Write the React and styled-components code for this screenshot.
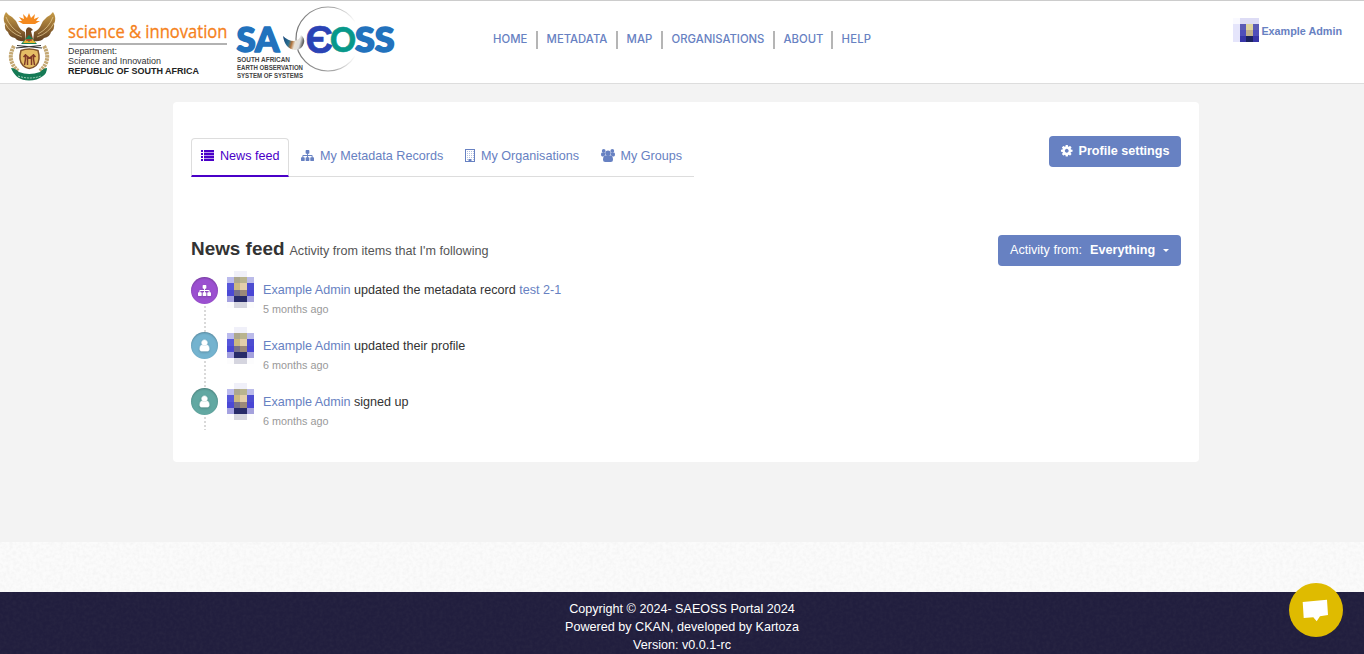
import React from "react";
import styled, { createGlobalStyle } from "styled-components";

const Global = createGlobalStyle`
  * { box-sizing: border-box; }
  body {
    margin: 0;
    background: #f3f3f3;
    color: #333;
    font: 12.6px/18px "Liberation Sans", Arial, sans-serif;
    overflow: hidden;
  }
`;

const Page = styled.div`
  height: 654px;
  display: flex;
  flex-direction: column;
`;

const Header = styled.header`
  height: 84px;
  flex: none;
  display: flex;
  align-items: flex-start;
  background: #fff;
  border-top: 1px solid #ccc;
  border-bottom: 1px solid #ddd;
`;

const LogoArt = styled.svg`
  display: block;
  flex: none;
`;

const Nav = styled.nav`
  display: flex;
  margin: 30px 0 0 84px;
  height: 18px;
  width: 400px;
  flex: none;
`;

const NavLink = styled.a`
  width: ${(p) => p.$w}px;
  flex: none;
  padding-left: ${(p) => (p.$first ? 0 : 8.6)}px;
  border-right: ${(p) => (p.$last ? "0" : "2px solid #b5b5b5")};
  color: #6781c2;
  font: 500 11.3px/16px Inter, "Open Sans", sans-serif;
  letter-spacing: ${(p) => p.$ls}px;
  white-space: nowrap;
`;

const Account = styled.div`
  margin: 17px 22px 0 auto;
  display: flex;
  color: #6781c2;
  font-weight: bold;
  font-size: 10.8px;
  line-height: 26px;
  gap: 3px;
  span { margin-left: -0.4px; }
`;

const Main = styled.main`
  height: 458px;
  flex: none;
  padding: 18px 165px 0 173px;
`;

const Card = styled.section`
  height: 360px;
  background: #fff;
  border-radius: 4px;
  padding: 34px 18px 0;
`;

const Row = styled.div`
  display: flex;
  justify-content: space-between;
  align-items: flex-start;
`;

const Tabs = styled.div`
  display: flex;
  width: 503px;
  height: 39px;
  margin-top: 2px;
  border-bottom: 1px solid #ddd;
`;

const Tab = styled.a`
  display: flex;
  align-items: center;
  height: 39px;
  width: ${(p) => p.$w}px;
  flex: none;
  padding-left: ${(p) => p.$pad || 9}px;
  padding-bottom: ${(p) => (p.$active ? 3 : 5)}px;
  white-space: nowrap;
  color: ${(p) => (p.$active ? "#4a00c8" : "#6781c2")};
  border: 1px solid ${(p) => (p.$active ? "#ddd" : "transparent")};
  border-bottom: ${(p) => (p.$active ? "2px solid #4a00c8" : "0")};
  border-radius: 4px 4px 0 0;
  svg { margin-right: 6px; }
`;

const Button = styled.button`
  display: flex;
  align-items: center;
  width: ${(p) => p.$w}px;
  height: 31px;
  padding: 0 0 1px ${(p) => p.$pad || 12}px;
  border: 0;
  border-radius: 4px;
  background: #6781c2;
  color: #fff;
  font: ${(p) => (p.$bold ? "bold" : "normal")} 12.6px/18px "Liberation Sans", Arial, sans-serif;
  white-space: nowrap;
  svg { margin-right: 5px; }
  strong { margin-left: 8px; }
`;

const Caret = styled.i`
  margin: 1px 0 0 8px;
  border: 3px solid transparent;
  border-top-color: #fff;
  border-bottom: 0;
`;

const FeedHead = styled(Row)`
  margin-top: 58px;
  height: 36px;
`;

const Heading = styled.h2`
  margin: 3px 0 0;
  font-size: 18.9px;
  line-height: 22px;
  small {
    margin-left: 5px;
    font-size: 12.6px;
    font-weight: normal;
    color: #555;
  }
`;

const Feed = styled.ul`
  list-style: none;
  margin: 0;
  padding: 0;
`;

const Item = styled.li`
  display: grid;
  grid-template-columns: 27px 27px 1fr;
  column-gap: 9px;
  height: 56px;
`;

const Rail = styled.div`
  display: flex;
  flex-direction: column;
  align-items: center;
  height: ${(p) => (p.$last ? 47 : 56)}px;
  padding-top: ${(p) => p.$top}px;
  margin-bottom: -6px;
  &::after {
    content: "";
    flex: 1;
    width: 2px;
    margin: 2px 0 ${(p) => (p.$last ? 0 : -5)}px 1px;
    background: repeating-linear-gradient(#d9d9d9 0 2px, transparent 2px 4px);
  }
`;

const Dot = styled.div`
  width: 27px;
  height: 27px;
  flex: none;
  position: relative;
  z-index: 1;
  border-radius: 50%;
  background: ${(p) => p.$c};
  box-shadow: inset 0 1px 2px rgba(0, 0, 0, 0.25);
  display: flex;
  align-items: center;
  justify-content: center;
  color: #fff;
  svg { filter: drop-shadow(0 1px 1px rgba(0, 0, 0, 0.2)); }
`;

const Entry = styled.div`
  padding-top: 10px;
  a { color: #6781c2; }
  time {
    display: block;
    margin-top: 1px;
    color: #999;
    font-size: 10.8px;
  }
`;

const Strip = styled.div`
  height: 50px;
  flex: none;
  background: #fbfbfb;
`;

const Footer = styled.footer`
  height: 62px;
  flex: none;
  padding-top: 8px;
  text-align: center;
  color: #fff;
  background: #211e3e;
  position: relative;
  p { margin: 0; position: relative; }
`;

const Grain = styled.svg`
  display: block;
  width: 100%;
  height: ${(p) => p.$h}px;
  position: ${(p) => (p.$over ? "absolute" : "static")};
  top: 0;
  left: 0;
`;

const Chat = styled.button`
  position: fixed;
  right: 21px;
  bottom: 17px;
  width: 54px;
  height: 54px;
  padding: 0;
  border: 0;
  border-radius: 50%;
  background: #dfbb00;
  svg { display: block; }
`;

const PATHS = {
  sitemap:
    "M1792 1248v320q0 40-28 68t-68 28h-320q-40 0-68-28t-28-68v-320q0-40 28-68t68-28h96v-192h-512v192h96q40 0 68 28t28 68v320q0 40-28 68t-68 28h-320q-40 0-68-28t-28-68v-320q0-40 28-68t68-28h96v-192h-512v192h96q40 0 68 28t28 68v320q0 40-28 68t-68 28h-320q-40 0-68-28t-28-68v-320q0-40 28-68t68-28h96v-192q0-52 38-90t90-38h512v-192h-96q-40 0-68-28t-28-68v-320q0-40 28-68t68-28h320q40 0 68 28t28 68v320q0 40-28 68t-68 28h-96v192h512q52 0 90 38t38 90v192h96q40 0 68 28t28 68z",
  user:
    "M1536 1399q0 109-62.5 187t-150.5 78h-854q-88 0-150.5-78t-62.5-187q0-85 8.5-160.5t31.5-152 58.5-131 94-89 134.5-34.5q131 128 313 128t313-128q76 0 134.5 34.5t94 89 58.5 131 31.5 152 8.5 160.5zm-256-887q0 159-112.5 271.5t-271.5 112.5-271.5-112.5-112.5-271.5 112.5-271.5 271.5-112.5 271.5 112.5 112.5 271.5z",
  cog:
    "M1152 896q0-106-75-181t-181-75-181 75-75 181 75 181 181 75 181-75 75-181zm512-109v222q0 12-8 23t-20 13l-185 28q-19 54-39 91 35 50 107 138 10 12 10 25t-9 23q-27 37-99 108t-94 71q-12 0-26-9l-138-108q-44 23-91 38-16 136-29 186-7 28-36 28h-222q-14 0-24.5-8.5t-11.5-21.5l-28-184q-49-16-90-37l-141 107q-10 9-25 9-14 0-25-11-126-114-165-168-7-10-7-23 0-12 8-23 15-21 51-66.5t54-70.5q-27-50-41-99l-183-27q-13-2-21-12.5t-8-23.5v-222q0-12 8-23t19-13l186-28q14-46 39-92-40-57-107-138-10-12-10-24 0-10 9-23 26-36 98.5-107.5t94.5-71.5q13 0 26 10l138 107q44-23 91-38 16-136 29-186 7-28 36-28h222q14 0 24.5 8.5t11.5 21.5l28 184q49 16 90 37l142-107q9-9 24-9 13 0 25 10 129 119 165 170 7 8 7 22 0 12-8 23-15 21-51 66.5t-54 70.5q26 50 41 98l183 28q13 2 21 12.5t8 23.5z",
};

const Glyph = ({ name, size = 13 }) => (
  <svg width={size} height={size} viewBox="0 0 1792 1792" fill="currentColor">
    <path d={PATHS[name]} stroke="currentColor" strokeWidth={name === "user" ? 90 : 0} />
  </svg>
);

const ListIcon = () => (
  <svg width="13" height="12" viewBox="0 0 13 12" fill="currentColor">
    {[0, 3, 6, 9].map((y) => (
      <g key={y}>
        <rect x="0" y={y} width="2" height="2" />
        <rect x="3" y={y} width="10" height="2" />
      </g>
    ))}
    <path d="M3 2h10v1H3zM3 5h10v1H3zM3 8h10v1H3z" opacity=".4" />
  </svg>
);

const BuildingIcon = () => (
  <svg width="10" height="13" viewBox="0 0 10 13" fill="currentColor">
    <path fillRule="evenodd" d="M0 0h10v13H0zM1 1v11h2.500v-2h3v2H9V1z" />
    <path d="M2 2h1v1H2zM4 2h1v1H4zM6 2h1v1H6zM8 2h1v1H8zM2 4h1v1H2zM4 4h1v1H4zM6 4h1v1H6zM8 4h1v1H8zM2 6h1v1H2zM4 6h1v1H4zM6 6h1v1H6zM8 6h1v1H8zM2 8h1v1H2zM4 8h1v1H4zM6 8h1v1H6zM8 8h1v1H8zM2 10h1v1H2zM8 10h1v1H8z" opacity=".5" />
  </svg>
);

const GroupIcon = () => (
  <svg width="14" height="13" viewBox="0 0 14 13" fill="currentColor">
    <circle cx="2.700" cy="2" r="1.900" />
    <circle cx="11.300" cy="2" r="1.900" />
    <circle cx="7" cy="4.300" r="2.700" />
    <path d="M0 5.500Q0 3.400 1 3.400q1.500 1 3 .6Q3.700 5.500 4.500 6.600q-1.500 0-2.100 1H1.400Q0 7.600 0 5.500zM14 5.500Q14 3.400 13 3.400q-1.500 1-3 .6.300 1.500-.5 2.600 1.500 0 2.100 1h1.100q1.300 0 1.300-2.100z" />
    <path d="M2 10.800Q2 6.600 4.600 6.500H9.400Q12 6.600 12 10.800 12 13 9.800 13H4.200Q2 13 2 10.800z" />
  </svg>
);

const COLS = [0, 7, 13, 20, 27];
const PIXELS = [
  ["#fff", "#f0f0f9", "#f0f0f9", "#fff"],
  ["#bbbbed", "#aca78e", "#b9b48e", "#bbbbe9"],
  ["#5656db", "#cbb982", "#e4cfaa", "#4d4dd0"],
  ["#4a48d5", "#77718a", "#9c8979", "#4945d4"],
  ["#a4a1e0", "#272b69", "#272b69", "#a4a1dc"],
  ["#fcfcfd", "#d5d5df", "#d5d5df", "#fcfcfd"],
];

const Avatar = () => (
  <svg width="27" height="37" shapeRendering="crispEdges">
    {PIXELS.map((row, r) =>
      row.map((c, i) => (
        <rect key={`${r}-${i}`} x={COLS[i]} y={[0, 6, 12, 19, 25, 31][r]} width={COLS[i + 1] - COLS[i]} height={[6, 6, 7, 6, 6, 6][r]} fill={c} />
      ))
    )}
  </svg>
);

const SmallAvatar = () => (
  <svg width="26" height="24" shapeRendering="crispEdges">
    <path fill="#f9f9ff" d="M0 0h7v6H0z" />
    <path fill="#dddcf5" d="M7 0h19v6H7z" />
    <path fill="#e5e5fb" d="M0 6h7v18H0z" />
    <path fill="#5c5cb5" d="M7 6h6v6H7zM20 6h6v6h-6z" />
    <path fill="#504fba" d="M7 12h6v6H7zM20 12h6v6h-6z" />
    <path fill="#3836a8" d="M7 18h6v6H7zM20 18h6v6h-6z" />
    <path fill="#dfd59e" d="M13 6h7v6h-7z" />
    <path fill="#c2b18c" d="M13 12h7v6h-7z" />
    <path fill="#1c2360" d="M13 18h7v6h-7z" />
  </svg>
);

const Logos = () => (
  <LogoArt width="409" height="82" viewBox="0 1 409 82">
    <defs>
      <linearGradient id="globe" x1="0" y1="0" x2="1" y2=".2">
        <stop offset="0" stopColor="#123f75" />
        <stop offset=".35" stopColor="#2c7192" />
        <stop offset=".5" stopColor="#b1743c" />
        <stop offset=".65" stopColor="#e8e2d6" />
        <stop offset=".85" stopColor="#ddd" />
        <stop offset="1" stopColor="#666" />
      </linearGradient>
      <linearGradient id="ring" x1="0" x2="1">
        <stop offset="0" stopColor="#777" />
        <stop offset=".6" stopColor="#aaa" />
        <stop offset=".93" stopColor="#fff" />
      </linearGradient>
      <linearGradient id="wing" x1="0" y1="0" x2="0" y2="1">
        <stop offset="0" stopColor="#c79c48" />
        <stop offset=".6" stopColor="#8d6530" />
        <stop offset="1" stopColor="#5f4022" />
      </linearGradient>
    </defs>

    <path d="M18 21l4 0-3-4 5 2-1-5 4 4 2-5 2 5 4-4-1 5 5-2-3 4 4 0-5 3H23z" fill="#f58a1f" />
    <g fill="url(#wing)">
      <path d="M6 12q3 4 6 5 4 3 6 8 2 5 7 7l1 9q-8 1-11-3-6-1-7-6-4-3-3-8-3-6 1-12z" />
      <path d="M53 12q-3 4-6 5-4 3-6 8-2 5-7 7l-1 9q8 1 11-3 6-1 7-6 4-3 3-8 3-6-1-12z" />
    </g>
    <path d="M6 17q4 11 15 17M5 23q5 10 17 14M53 17q-4 11-15 17M54 23q-5 10-17 14" fill="none" stroke="#ecd49d" strokeWidth=".7" />
    <path d="M26 30q1-4 5-2l2 2-2 1 2 8h-7z" fill="#704923" />
    <path d="M29 35l8 9H21z" fill="#188052" />
    <path d="M23 43l3-4 3 3 3-3 4 4z" fill="#e9b435" />
    <path d="M26 40h6" stroke="#c33c2c" strokeWidth="1.500" />
    <path d="M17 45.500l25 2.500M41 45.500l-25 2.500" stroke="#333" strokeWidth="1.200" />
    <path d="M14 46q-8 14 4 25M44 46q8 14-4 25" fill="none" stroke="#c4a873" strokeWidth="4" strokeDasharray="2.500 .7" />
    <path d="M21 50.500q8-3 17 0 3 10-2 15-7 6-13 0-5-5-2-15z" fill="#e5bd65" stroke="#80522b" strokeWidth="1.500" />
    <path d="M25.500 54v5l-1 6M27.500 57v8M33.500 54v5l1 6M31.500 57v8M23.500 57l2-2 4 3 4-3 2 2" stroke="#803b28" strokeWidth="1.500" fill="none" />
    <path d="M11 68q4 0 8 4 10 4 21 0 4-4 7-4 0 5-4 8-6 4.500-14 4.500-13 0-18-12.500z" fill="#157a55" />
    <path d="M18 76q12 4 23 0" fill="none" stroke="#9fd0b8" strokeWidth="1" strokeDasharray="2 1" />

    <text x="68" y="38" fontFamily="Open Sans, sans-serif" fontSize="17.500" fill="#f58220" stroke="#f58220" strokeWidth=".3" textLength="159.500" lengthAdjust="spacingAndGlyphs">science &amp; innovation</text>
    <path d="M69 44h158" stroke="#666" strokeWidth="1.200" />
    <g fontFamily="Liberation Sans, sans-serif" fontSize="8.700" fill="#333">
      <text x="68" y="54" textLength="49" lengthAdjust="spacingAndGlyphs">Department:</text>
      <text x="68" y="64" textLength="93" lengthAdjust="spacingAndGlyphs">Science and Innovation</text>
      <text x="68" y="73.500" fontWeight="bold" fill="#222" textLength="131" lengthAdjust="spacingAndGlyphs">REPUBLIC OF SOUTH AFRICA</text>
    </g>

    <circle cx="328" cy="39" r="32" fill="none" stroke="url(#ring)" strokeWidth="1.200" />
    <g fontFamily="Lato, sans-serif" fontWeight="900" fontSize="33.500" strokeWidth="1.600" strokeLinejoin="round">
      <text x="236.500" y="51.500" fill="#2272bd" stroke="#2272bd" textLength="43" lengthAdjust="spacingAndGlyphs">SA</text>
      <text x="330" y="51.500" fill="#07988a" stroke="#07988a" strokeWidth=".6" textLength="26" lengthAdjust="spacingAndGlyphs">O</text>
      <text x="305.500" y="53" fill="#2b43b5" stroke="#2b43b5" strokeWidth=".6" fontFamily="Liberation Sans, sans-serif" fontWeight="bold" fontSize="38" textLength="27.500" lengthAdjust="spacingAndGlyphs">Є</text>
      <text x="355" y="51.500" fill="#2272bd" stroke="#2272bd" textLength="39.500" lengthAdjust="spacingAndGlyphs">SS</text>
    </g>
    <path d="M283 36q5 5 11 5 6-1 7-6 4 3 3 8-2 7-9 7-10-1-12-14z" fill="url(#globe)" />
    <g fontFamily="Liberation Sans, sans-serif" fontWeight="bold" fontSize="6.600" fill="#444">
      <text x="237" y="61.800" textLength="53" lengthAdjust="spacingAndGlyphs">SOUTH AFRICAN</text>
      <text x="237" y="69.800" textLength="66" lengthAdjust="spacingAndGlyphs">EARTH OBSERVATION</text>
      <text x="237" y="77.800" textLength="66" lengthAdjust="spacingAndGlyphs">SYSTEM OF SYSTEMS</text>
    </g>
  </LogoArt>
);

const Texture = ({ id, h, shade, alpha, over }) => (
  <Grain $h={h} $over={over} aria-hidden="true">
    <filter id={id} x="0" y="0" width="100%" height="100%" colorInterpolationFilters="sRGB">
      <feTurbulence type="fractalNoise" baseFrequency=".3" numOctaves="2" seed="4" />
      <feColorMatrix values={`0 0 0 0 ${shade} 0 0 0 0 ${shade} 0 0 0 0 ${shade} ${alpha} 0 0 0 ${-alpha * 0.35}`} />
    </filter>
    <rect width="100%" height="100%" filter={`url(#${id})`} />
  </Grain>
);

const NAV = [
  ["HOME", 45, 0.08],
  ["METADATA", 80, 0],
  ["MAP", 45, 0],
  ["ORGANISATIONS", 112, -0.02],
  ["ABOUT", 58, 0],
  ["HELP", 50, 0.2],
];

const FEED = [
  { icon: "sitemap", color: "#9b50d0", text: " updated the metadata record ", link: "test 2-1", ago: "5 months ago" },
  { icon: "user", color: "#74b3cf", text: " updated their profile", ago: "6 months ago" },
  { icon: "user", color: "#62a8a2", text: " signed up", ago: "6 months ago" },
];

export default function App() {
  return (
    <Page>
      <Global />
      <Header>
        <Logos />
        <Nav>
          {NAV.map(([label, w, ls], i) => (
            <NavLink key={label} $w={w} $ls={ls} $first={i === 0} $last={i === NAV.length - 1}>
              {label}
            </NavLink>
          ))}
        </Nav>
        <Account>
          <SmallAvatar />
          <span>Example Admin</span>
        </Account>
      </Header>
      <Main>
        <Card>
          <Row>
            <Tabs>
              <Tab $active $w={98}><ListIcon />News feed</Tab>
              <Tab $w={165} $pad={11}><Glyph name="sitemap" />My Metadata Records</Tab>
              <Tab $w={136} $pad={10}><BuildingIcon />My Organisations</Tab>
              <Tab $w={104} $pad={9.5}><GroupIcon />My Groups</Tab>
            </Tabs>
            <Button $w={132} $pad={11} $bold><Glyph name="cog" size={13.5} />Profile settings</Button>
          </Row>
          <FeedHead>
            <Heading>News feed<small>Activity from items that I'm following</small></Heading>
            <Button $w={183}>Activity from:<strong>Everything</strong><Caret /></Button>
          </FeedHead>
          <Feed>
            {FEED.map((f, i) => (
              <Item key={f.text}>
                <Rail $top={i === 0 ? 6 : 5} $last={i === FEED.length - 1}>
                  <Dot $c={f.color}><Glyph name={f.icon} /></Dot>
                </Rail>
                <Avatar />
                <Entry>
                  <a>Example Admin</a>{f.text}{f.link && <a>{f.link}</a>}
                  <time>{f.ago}</time>
                </Entry>
              </Item>
            ))}
          </Feed>
        </Card>
      </Main>
      <Strip><Texture id="paper" h={50} shade={0.75} alpha={0.22} /></Strip>
      <Footer>
        <Texture id="cloth" h={62} shade={0.45} alpha={0.14} over />
        <p>Copyright © 2024- SAEOSS Portal 2024</p>
        <p>Powered by CKAN, developed by Kartoza</p>
        <p>Version: v0.0.1-rc</p>
      </Footer>
      <Chat aria-label="Chat">
        <svg width="54" height="54" viewBox="0 0 54 54">
          <path d="M13.700 19L38 16.700 39 32 31 33.300 27.700 38.300 24.300 34.300 14.700 35z" fill="#fff" />
        </svg>
      </Chat>
    </Page>
  );
}
